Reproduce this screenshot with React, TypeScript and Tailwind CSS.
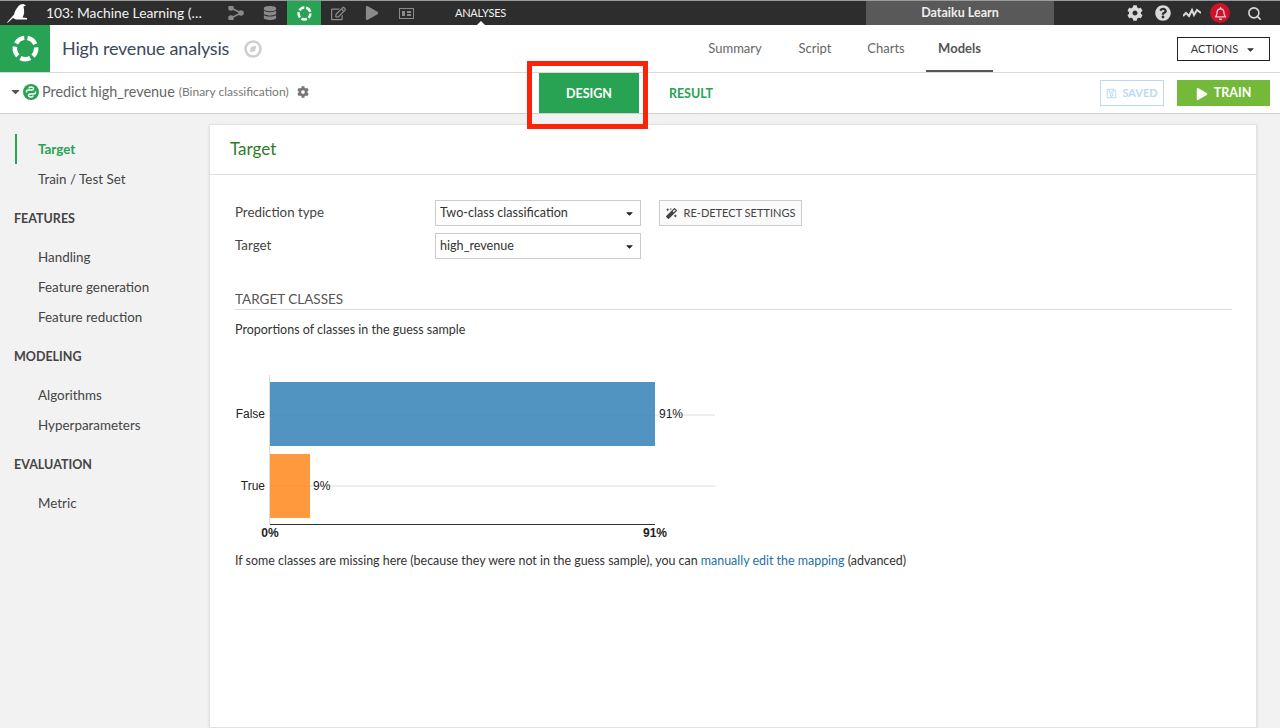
import { Search } from 'lucide-react';
import { FaCog, FaQuestionCircle, FaRegBell, FaPlay, FaDatabase, FaCaretDown, FaRegSave, FaMagic, FaRegEdit } from 'react-icons/fa';

// dataiku "analysis" ring, five dashes
function Ring({ size }: { size: number }) {
  return (
    <svg width={size} height={size} viewBox="0 0 24 24" fill="none">
      <circle cx="12" cy="12" r="9.5" stroke="white" strokeWidth="4" strokeDasharray="9 2.94" strokeDashoffset="-10.5" />
    </svg>
  );
}

function Bird() {
  return (
    <svg width="22" height="20" viewBox="0 0 22 20" fill="white">
      <path d="M0 19.5 L7 11.5 C8 8 9 6 10.5 4.5 C11.5 2 14 1 16.5 1 L19 2.5 L16.5 3.5 C17.5 8 17.5 11 15.5 14.5 L20 15 L20 16.5 L9 16.5 L6 15 L0.7 19.8 Z" />
    </svg>
  );
}

function FlowIcon() {
  return (
    <svg width="16" height="14" viewBox="0 0 16 14" fill="none" stroke="#8a8a8a" strokeWidth="1.6">
      <path d="M3 2 L13 7 L3 12" />
      <circle cx="3" cy="2" r="2" fill="#8a8a8a" />
      <circle cx="13" cy="7" r="2" fill="#8a8a8a" />
      <circle cx="3" cy="12" r="2" fill="#8a8a8a" />
    </svg>
  );
}

function NotebookIcon() {
  return (
    <svg width="15" height="11" viewBox="0 0 15 11" fill="none">
      <rect x="0.5" y="0.5" width="14" height="10" stroke="#8a8a8a" />
      <rect x="3" y="3" width="3" height="5" fill="#8a8a8a" />
      <rect x="8" y="3" width="4" height="2" fill="#8a8a8a" />
      <rect x="8" y="6" width="4" height="2" fill="#8a8a8a" />
    </svg>
  );
}

function Pulse() {
  return (
    <svg width="18" height="12" viewBox="0 0 18 12" fill="none" stroke="#d9d9d9" strokeWidth="2">
      <path d="M0 9 L3 6 L6 9 L9 3 L11 8 L14 3 L18 6" />
    </svg>
  );
}

function PythonBadge() {
  return (
    <svg width="16" height="16" viewBox="0 0 16 16" fill="none">
      <circle cx="8" cy="8" r="8" fill="#27a353" />
      <path d="M3.5 8.5 V7.2 C3.5 6.2 4.5 6 5.5 6 H9 C10 6 10.5 5.5 10.5 4.7 C10.5 3.7 9 3 8 3 C7 3 6 3.5 6 4.5" stroke="white" strokeWidth="1.5" />
      <path d="M12.5 7.5 V8.8 C12.5 9.8 11.5 10 10.5 10 H7 C6 10 5.5 10.5 5.5 11.3 C5.5 12.3 7 13 8 13 C9 13 10 12.5 10 11.5" stroke="white" strokeWidth="1.5" />
    </svg>
  );
}

function CompassIcon() {
  return (
    <svg width="18" height="18" viewBox="0 0 18 18" fill="none">
      <circle cx="9" cy="9" r="7.5" stroke="#cfcfcf" strokeWidth="2.6" />
      <path d="M6 12 L6.5 8 C7 6.5 9.5 6 12 6 C12 8.5 11.5 11 10 11.5 Z" fill="#cfcfcf" />
    </svg>
  );
}

function TopBar() {
  return (
    <div className="h-[25px] flex items-stretch bg-[#2d2d2d] border-t border-[#9a9a9a] text-white">
      <div className="w-[46px] pl-[7px] flex items-center"><Bird /></div>
      <div className="w-[173px] flex items-center text-[13.8px] text-[#f2f2f2] whitespace-nowrap">103: Machine Learning (…</div>
      <div className="w-[34px] flex items-center justify-center"><FlowIcon /></div>
      <div className="w-[34px] flex items-center justify-center text-[#8a8a8a]"><FaDatabase size={14} /></div>
      <div className="w-[34px] bg-[#27a353] flex items-center justify-center"><Ring size={15} /></div>
      <div className="w-[34px] flex items-center justify-center text-[#8a8a8a]"><FaRegEdit size={15} /></div>
      <div className="w-[34px] flex items-center justify-center text-[#8a8a8a]"><FaPlay size={14} /></div>
      <div className="w-[34px] flex items-center justify-center"><NotebookIcon /></div>
      <div className="w-[115px] flex items-center justify-center text-[11px] tracking-[-0.2px] text-[#f2f2f2] relative">
        ANALYSES
        <span className="absolute bottom-0 left-[54px] w-0 h-0 border-x-[4px] border-x-transparent border-b-[4px] border-b-white" />
      </div>
      <div className="w-[328px]" />
      <div className="w-[188px] bg-[#595959] flex items-center justify-center text-[12.5px] font-bold text-[#eee]">Dataiku Learn</div>
      <div className="flex-1 flex items-center text-[#d9d9d9]">
        <span className="w-[28px] ml-[67px] flex justify-center"><FaCog size={16} /></span>
        <span className="w-[28px] flex justify-center"><FaQuestionCircle size={16} /></span>
        <span className="w-[30px] flex justify-center"><Pulse /></span>
        <span className="w-[26px] flex justify-center">
          <span className="w-[20px] h-[20px] rounded-full bg-[#d0112b] flex items-center justify-center"><FaRegBell size={13} /></span>
        </span>
        <span className="w-[42px] flex justify-center"><Search size={15} strokeWidth={2.5} /></span>
      </div>
    </div>
  );
}

function Header() {
  const tabs = [
    { label: 'Summary', w: 'w-[98px]', active: false },
    { label: 'Script', w: 'w-[62px]', active: false },
    { label: 'Charts', w: 'w-[80px]', active: false },
    { label: 'Models', w: 'w-[67px]', active: true },
  ];
  return (
    <div className="h-[48px] flex items-stretch bg-white border-b border-[#d9d9d9]">
      <div className="w-[50px] bg-[#27a353] flex items-center justify-center"><Ring size={27} /></div>
      <div className="ml-[12px] flex items-center text-[18px] tracking-[-0.2px] text-[#3b4a5a]">High revenue analysis</div>
      <div className="ml-[15px] flex items-center"><CompassIcon /></div>
      <div className="flex-1" />
      <div className="flex items-stretch mr-[287px]">
        {tabs.map((t) => (
          <div
            key={t.label}
            className={`${t.w} flex items-center justify-center text-[13px] ${t.active ? 'pt-[2px] font-bold text-[#555] border-b-2 border-[#555]' : 'text-[#666]'}`}
          >
            {t.label}
          </div>
        ))}
      </div>
      <div className="absolute right-[10px] top-[37px] w-[93px] h-[24px] border border-[#222] flex items-center justify-center gap-[7px] text-[11px] text-[#333]">
        ACTIONS <FaCaretDown size={11} />
      </div>
    </div>
  );
}

function SubHeader() {
  return (
    <div className="h-[41px] flex items-stretch bg-white border-b border-[#cfcfcf] relative">
      <div className="w-[539px] pl-[9px] flex items-center pb-[3px]">
        <FaCaretDown size={13} className="text-[#555]" />
        <span className="ml-[1px]"><PythonBadge /></span>
        <span className="ml-[3px] text-[14.4px] text-[#666]">Predict high_revenue</span>
        <span className="ml-[4px] text-[12px] text-[#777]">(Binary classification)</span>
        <FaCog size={12} className="ml-[8px] text-[#777]" />
      </div>
      <div className="w-[100px] pt-[2px] bg-[#27a353] flex items-center justify-center text-[12.5px] font-bold text-white">DESIGN</div>
      <div className="w-[104px] pt-[2px] flex items-center justify-center text-[12.5px] font-bold text-[#27a353]">RESULT</div>
      <div className="flex-1" />
      <div className="self-center h-[26px] w-[64px] mr-[13px] border border-[#bcd9f3] flex items-center justify-center gap-[5px] text-[11px] font-bold text-[#bcd9f3]">
        <FaRegSave size={11} /> SAVED
      </div>
      <div className="self-center h-[26px] w-[93px] mr-[10px] pt-[1px] bg-[#75b93a] flex items-center justify-center gap-[6px] text-[12.5px] font-bold text-white">
        <FaPlay size={12} /> TRAIN
      </div>
      {/* red annotation round the design tab */}
      <div className="absolute left-[527px] top-[-12px] w-[121px] h-[68px] border-[5px] border-[#fb2409] pointer-events-none" />
    </div>
  );
}

function Sidebar() {
  const Item = ({ label }: { label: string }) => (
    <div className="h-[30px] pl-[38px] flex items-center text-[13.4px] text-[#444]">{label}</div>
  );
  const Head = ({ label }: { label: string }) => (
    <div className="mt-[15px] h-[20px] mb-[13px] pl-[14px] flex items-center text-[12.5px] font-bold text-[#444]">{label}</div>
  );
  return (
    <div className="w-[209px] shrink-0 pt-[20px]">
      <div className="h-[30px] ml-[15px] pl-[21px] border-l-2 border-[#27a353] flex items-center text-[13.4px] font-bold text-[#27a353]">Target</div>
      <Item label="Train / Test Set" />
      <Head label="FEATURES" />
      <Item label="Handling" />
      <Item label="Feature generation" />
      <Item label="Feature reduction" />
      <Head label="MODELING" />
      <Item label="Algorithms" />
      <Item label="Hyperparameters" />
      <Head label="EVALUATION" />
      <Item label="Metric" />
    </div>
  );
}

function Select({ value }: { value: string }) {
  return (
    <div className="w-[206px] h-[26px] border border-[#ccc] flex items-center justify-between pl-[4px] pr-[5px] text-[12.6px] text-[#333] bg-white">
      {value}
      <FaCaretDown size={11} className="text-[#222]" />
    </div>
  );
}

function ClassChart() {
  return (
    <svg width="500" height="170" viewBox="0 0 500 170" className="block">
      <line x1="35" y1="45" x2="480" y2="45" stroke="#ddd" />
      <line x1="35" y1="116" x2="480" y2="116" stroke="#ddd" />
      <rect x="35" y="12" width="385" height="64" fill="#2678b2" fillOpacity="0.8" />
      <rect x="35" y="84" width="40" height="64" fill="#ff7f0e" fillOpacity="0.8" />
      <line x1="34.5" y1="5" x2="34.5" y2="155" stroke="#ddd" />
      <line x1="35" y1="154.5" x2="420" y2="154.5" stroke="#333" />
      <g fontFamily="'Liberation Sans', sans-serif" fontSize="12" fill="#222">
        <text x="30" y="48" textAnchor="end">False</text>
        <text x="30" y="120" textAnchor="end">True</text>
        <text x="424" y="48">91%</text>
        <text x="78" y="120">9%</text>
        <text x="35" y="167" textAnchor="middle" fontWeight="bold">0%</text>
        <text x="420" y="167" textAnchor="middle" fontWeight="bold">91%</text>
      </g>
    </svg>
  );
}

function Card() {
  return (
    <div className="w-[1048px] h-[604px] mt-[10px] bg-white border border-[#e2e2e2] shadow-sm">
      <div className="h-[50px] pl-[20px] pb-[1px] flex items-center border-b border-[#dfdfdf] text-[17px] text-[#2e7d1f]">Target</div>
      <div className="pl-[25px] pr-[24px] pt-[25px]">
        <div className="flex items-center h-[26px]">
          <div className="w-[200px] text-[13.3px] text-[#444]">Prediction type</div>
          <Select value="Two-class classification" />
          <div className="ml-[18px] w-[143px] h-[26px] border border-[#ccc] bg-[#fafafa] flex items-center justify-center gap-[7px] text-[11px] text-[#444]">
            <FaMagic size={11} /> RE-DETECT SETTINGS
          </div>
        </div>
        <div className="flex items-center h-[26px] mt-[7px]">
          <div className="w-[200px] text-[13.3px] text-[#444]">Target</div>
          <Select value="high_revenue" />
        </div>
        <div className="mt-[31px] h-[20px] border-b border-[#ddd] flex items-center text-[13.5px] text-[#555]">TARGET CLASSES</div>
        <div className="mt-[12px] text-[12.5px] leading-[16px] text-[#333]">Proportions of classes in the guess sample</div>
        <div className="mt-[32px]"><ClassChart /></div>
        <div className="mt-[13px] text-[12.45px] leading-[16px] text-[#333]">
          If some classes are missing here (because they were not in the guess sample), you can{' '}
          <span className="text-[#1f6fa8]">manually edit the mapping</span> (advanced)
        </div>
      </div>
    </div>
  );
}

export default function App() {
  return (
    <div className="w-[1280px] h-[728px] overflow-hidden relative bg-[#f2f2f2] font-['Lato','Liberation_Sans',sans-serif]">
      <TopBar />
      <Header />
      <SubHeader />
      <div className="flex">
        <Sidebar />
        <Card />
      </div>
    </div>
  );
}
